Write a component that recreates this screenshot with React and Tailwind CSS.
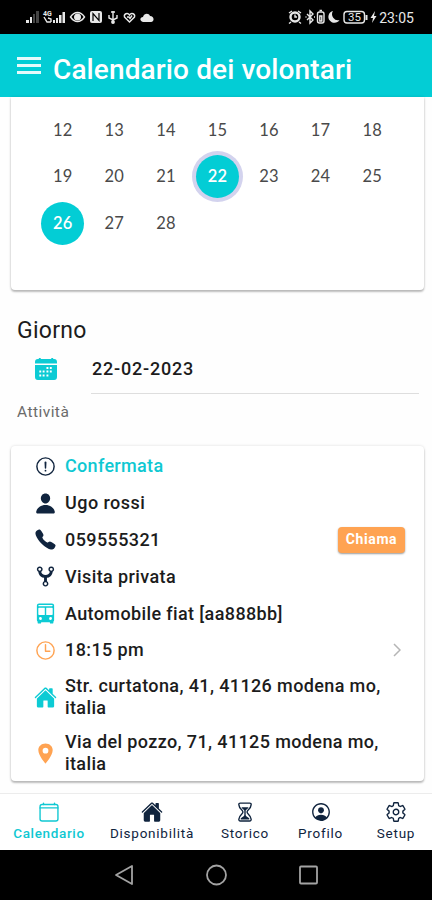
import clsx from 'clsx'
import {
  IoAlertCircleOutline,
  IoBus,
  IoCalendarClearOutline,
  IoCall,
  IoGitNetwork,
  IoHome,
  IoHourglassOutline,
  IoLocationSharp,
  IoPerson,
  IoPersonCircleOutline,
  IoSettingsOutline,
  IoTimeOutline,
} from 'react-icons/io5'

const DAYS = [12, 13, 14, 15, 16, 17, 18, 19, 20, 21, 22, 23, 24, 25, 26, 27, 28]
const BOOKED_DAY = 26
const SELECTED_DAY = 22

const ROWS = [
  { icon: IoAlertCircleOutline, label: 'Confermata', color: 'text-[#10243e]', textColor: 'text-[#0fc8d2]', spacing: 'tracking-[0.320px]' },
  { icon: IoPerson, label: 'Ugo rossi', color: 'text-[#10243e]', spacing: 'tracking-[0.450px]' },
  { icon: IoCall, label: '059555321', color: 'text-[#10243e]', spacing: 'tracking-[0.400px]', action: 'Chiama' },
  { icon: IoGitNetwork, label: 'Visita privata', color: 'text-[#10243e]', spacing: 'tracking-[0.400px]' },
  { icon: IoBus, label: 'Automobile fiat [aa888bb]', color: 'text-[#0dcbd4]', spacing: 'tracking-[0.380px]' },
  { icon: IoTimeOutline, label: '18:15 pm', color: 'text-[#ffa352]', spacing: 'tracking-[0.400px]', chevron: true },
]

const ADDRESSES = [
  { icon: IoHome, lines: ['Str. curtatona, 41, 41126 modena mo,', 'italia'], color: 'text-[#0dcbd4]' },
  { icon: IoLocationSharp, lines: ['Via del pozzo, 71, 41125 modena mo,', 'italia'], color: 'text-[#ffa352]' },
]

const TABS = [
  { icon: IoCalendarClearOutline, label: 'Calendario', width: 'w-[98px]', active: true },
  { icon: IoHome, label: 'Disponibilità', width: 'w-[108px]' },
  { icon: IoHourglassOutline, label: 'Storico', width: 'w-[78px]' },
  { icon: IoPersonCircleOutline, label: 'Profilo', width: 'w-[73px]' },
  { icon: IoSettingsOutline, label: 'Setup', width: 'w-[75px] pl-[3px]' },
]

function StatusBar() {
  return (
    <div className="flex h-[34px] shrink-0 items-center bg-black pl-[26px] pr-[18px] text-[#e8e8e8]">
      {/* SIM signals, eye comfort, NFC, USB, health, cloud */}
      <svg width="128" height="16" viewBox="0 0 128 16" fill="none" stroke="currentColor" strokeWidth="1.4">
        <path d="M0 14h3v-3H0zM4 14h2V8H4z" fill="currentColor" stroke="none" />
        <path d="M7 14h2V5H7zM10 14h3V2h-3z" fill="#444" stroke="none" />
        <path d="M27 14h2v-3h-2zM30 14h2V9h-2zM33 14h2.500V6H33zM36.500 14h2.500V3h-2.500z" fill="currentColor" stroke="none" />
        <path d="M18 8l3 5h4M22 9l3 1v3" />
        <path d="M44.500 8c4-6 10-6 14 0-4 6-10 6-14 0z" />
        <circle cx="51.500" cy="8" r="2.800" fill="currentColor" />
        <rect x="64" y="2" width="12" height="12" rx="2" fill="currentColor" stroke="none" />
        <path d="M67 12V4.500l6 7V4" stroke="#000" strokeWidth="1.200" />
        <path d="M87 2v12M83 6v3l4 2 4-2V6M85 3h4" />
        <circle cx="87" cy="13" r="1.200" fill="currentColor" />
        <path d="M103.500 13L98.500 8c-1-3 3-5 5-2 2-3 6-1 5 2zM101 8h2l1 1.500 2-3" />
        <path d="M117 13c-4-1-3-5 0-5 1-4 6-4 7-1 4 0 5 5 1 6z" fill="currentColor" stroke="none" />
        <text x="17" y="7" fontSize="7" fontWeight="700" fill="currentColor" stroke="none" fontFamily="Roboto, sans-serif">4G</text>
      </svg>
      <div className="ml-auto flex items-center">
        {/* alarm, bluetooth, vibration, do not disturb, battery, charging */}
        <svg width="92" height="16" viewBox="0 0 92 16" fill="none" stroke="currentColor" strokeWidth="1.400">
          <circle cx="9" cy="8" r="4.500" strokeWidth="2.400" />
          <path d="M9 5.500V8h2M3 4l3-2M15 4l-3-2M5 13l-2 1.500M13 13l2 1.500" />
          <path d="M21 5l6 6-3 3V2l3 3-6 6M19.500 8h1M28 8h1" />
          <rect x="31.500" y="3" width="6.500" height="11" rx="2" />
          <path d="M33.800 7h2v5h-2zM33.500 1.500h2.500" />
          <path d="M47 2a6 6 0 1 0 6.500 9A6 6 0 0 1 47 2z" fill="currentColor" stroke="none" />
          <rect x="58" y="2.500" width="20.500" height="11.500" rx="3" />
          <path d="M80.500 6v5" strokeWidth="2" />
          <path d="M89 2l-4.500 7H87l-1 5 4.500-7H88z" fill="currentColor" stroke="none" />
          <text x="62" y="12.300" fontSize="11.500" fill="currentColor" stroke="none" fontFamily="Roboto, sans-serif">35</text>
        </svg>
        <span className="ml-px mt-px text-[14px] leading-4">23:05</span>
      </div>
    </div>
  )
}

function Header() {
  return (
    <header className="flex h-[63px] shrink-0 items-center bg-[#03cdd5] pl-[17px] text-white">
      <div className="flex w-6 flex-col gap-[4px]">
        <span className="h-[3px] bg-white/90" />
        <span className="h-[3px] bg-white/90" />
        <span className="h-[3px] bg-white/90" />
      </div>
      <h1 className="ml-[12px] mt-[9px] whitespace-nowrap text-[28px] font-medium leading-8 tracking-[0.120px]">Calendario dei volontari</h1>
    </header>
  )
}

function CalendarCard() {
  return (
    <section className="ml-[11px] mr-[8px] h-[193px] shrink-0 rounded-b-[4px] bg-white pl-[26px] pt-[10px] shadow-[0_2px_2px_rgba(0,0,0,0.24),0_0_3px_rgba(0,0,0,0.14)]">
      <div className="grid w-[361px] auto-rows-[46.500px] grid-cols-7 font-['Lato',sans-serif] text-[16.500px] tracking-[0.200px] text-[#4a4a4a]">
        {DAYS.map((day) => (
          <div key={day} className="flex items-center justify-center">
            <span
              className={clsx(
                'flex size-[43px] shrink-0 items-center justify-center rounded-full',
                (day === BOOKED_DAY || day === SELECTED_DAY) && 'bg-[#03cdd5] font-semibold text-white',
                day === SELECTED_DAY && 'ring-[4px] ring-[#d3d3ee]',
              )}
            >
              {day}
            </span>
          </div>
        ))}
      </div>
    </section>
  )
}

function CalendarIcon() {
  return (
    <svg width="22" height="22" viewBox="0 0 23 22" preserveAspectRatio="none" className="text-[#0dcbd4]">
      <path
        fill="currentColor"
        d="M4 0h2v1h11V0h2v1h1a3 3 0 0 1 3 3v1.500H0V4a3 3 0 0 1 3-3h1zM0 7h23V19a3 3 0 0 1-3 3H3a3 3 0 0 1-3-3z"
      />
      <path
        fill="#fff"
        d="M12 9h2v2h-2zM15.500 9h2v2h-2zM4.500 12.500h2v2h-2zM8 12.500h2v2H8zM12 12.500h2v2h-2zM15.500 12.500h2v2h-2zM4.500 16.500h2v2h-2zM8 16.500h2v2H8zM12 16.500h2v2h-2z"
      />
    </svg>
  )
}

function DaySection() {
  return (
    <section className="flex h-[156px] shrink-0 flex-col px-[17px] pt-[27px]">
      <h2 className="text-[23px] leading-7 tracking-[0.300px]">Giorno</h2>
      <div className="ml-[18px] mr-[-4px] flex h-[49px] items-start">
        <div className="mt-[13px]">
          <CalendarIcon />
        </div>
        <div className="ml-[34px] h-[49px] flex-1 border-b border-[#dedede] pl-px pt-[12px] text-[18px] font-medium leading-6 tracking-[0.800px]">
          22-02-2023
        </div>
      </div>
      <p className="mt-[8px] text-[15.500px] leading-5 tracking-[0.450px] text-[#6b6b6b]">Attività</p>
    </section>
  )
}

function ActivityCard() {
  return (
    <section className="ml-[11px] mr-[8px] h-[335px] shrink-0 rounded-[4px] bg-white pl-[23px] pr-[19px] pt-[2px] shadow-[0_2px_2px_rgba(0,0,0,0.24),0_0_3px_rgba(0,0,0,0.14)]">
      {ROWS.map(({ icon: Icon, label, color, textColor, spacing, action, chevron }) => (
        <div key={label} className="flex h-[36.800px] items-center">
          <Icon className={clsx('size-[23px] shrink-0', color)} />
          <span className={clsx('ml-[8px] whitespace-nowrap text-[18px] font-medium leading-6', textColor, spacing)}>{label}</span>
          {action && (
            <button
              type="button"
              className="ml-auto h-[26px] w-[67px] rounded-[4px] bg-[#ffa352] text-[14px] font-bold tracking-[0.600px] text-white shadow-[0_1px_2px_rgba(0,0,0,0.4)]"
            >
              {action}
            </button>
          )}
          {chevron && (
            <svg width="8" height="14" viewBox="0 0 8 14" className="mr-[4px] ml-auto" fill="none" stroke="#b5b5b5" strokeWidth="1.500">
              <path d="M1 1l6 6-6 6" />
            </svg>
          )}
        </div>
      ))}
      {ADDRESSES.map(({ icon: Icon, lines, color }) => (
        <div key={lines[0]} className="flex h-[56.500px] items-center">
          <Icon className={clsx('size-[23px] shrink-0', color)} />
          <p className="mb-[1px] ml-[8px] whitespace-nowrap text-[18px] font-medium leading-[22px] tracking-[0.380px]">
            {lines[0]}
            <br />
            {lines[1]}
          </p>
        </div>
      ))}
    </section>
  )
}

function TabBar() {
  return (
    <nav className="mt-auto flex h-[57px] shrink-0 border-t border-[#ececec] bg-white">
      {TABS.map(({ icon: Icon, label, width, active }) => (
        <a
          key={label}
          className={clsx('flex flex-col items-center pt-[7px]', width, active ? 'text-[#0fc8d2]' : 'text-[#10243e]')}
        >
          <Icon className="size-[22px]" />
          <span className={clsx('mt-[2px] text-[13.500px] leading-4', active ? 'font-medium tracking-[0.650px]' : 'tracking-[0.750px]')}>
            {label}
          </span>
        </a>
      ))}
    </nav>
  )
}

function SystemNav() {
  return (
    <div className="flex h-[50px] shrink-0 items-center justify-center bg-black">
      <svg width="204" height="24" viewBox="0 0 204 24" fill="none" stroke="#a3a3a3" strokeWidth="1.800">
        <path d="M18 3v18L2 12z" strokeLinejoin="round" />
        <circle cx="102.500" cy="12" r="9.500" />
        <rect x="186" y="3.500" width="17" height="17" rx="1" />
      </svg>
    </div>
  )
}

export default function App() {
  return (
    <div className="flex h-[900px] w-[432px] flex-col overflow-hidden bg-[#fefefe] font-['Roboto',sans-serif] text-[#1c1c1c]">
      <StatusBar />
      <Header />
      <CalendarCard />
      <DaySection />
      <ActivityCard />
      <TabBar />
      <SystemNav />
    </div>
  )
}
